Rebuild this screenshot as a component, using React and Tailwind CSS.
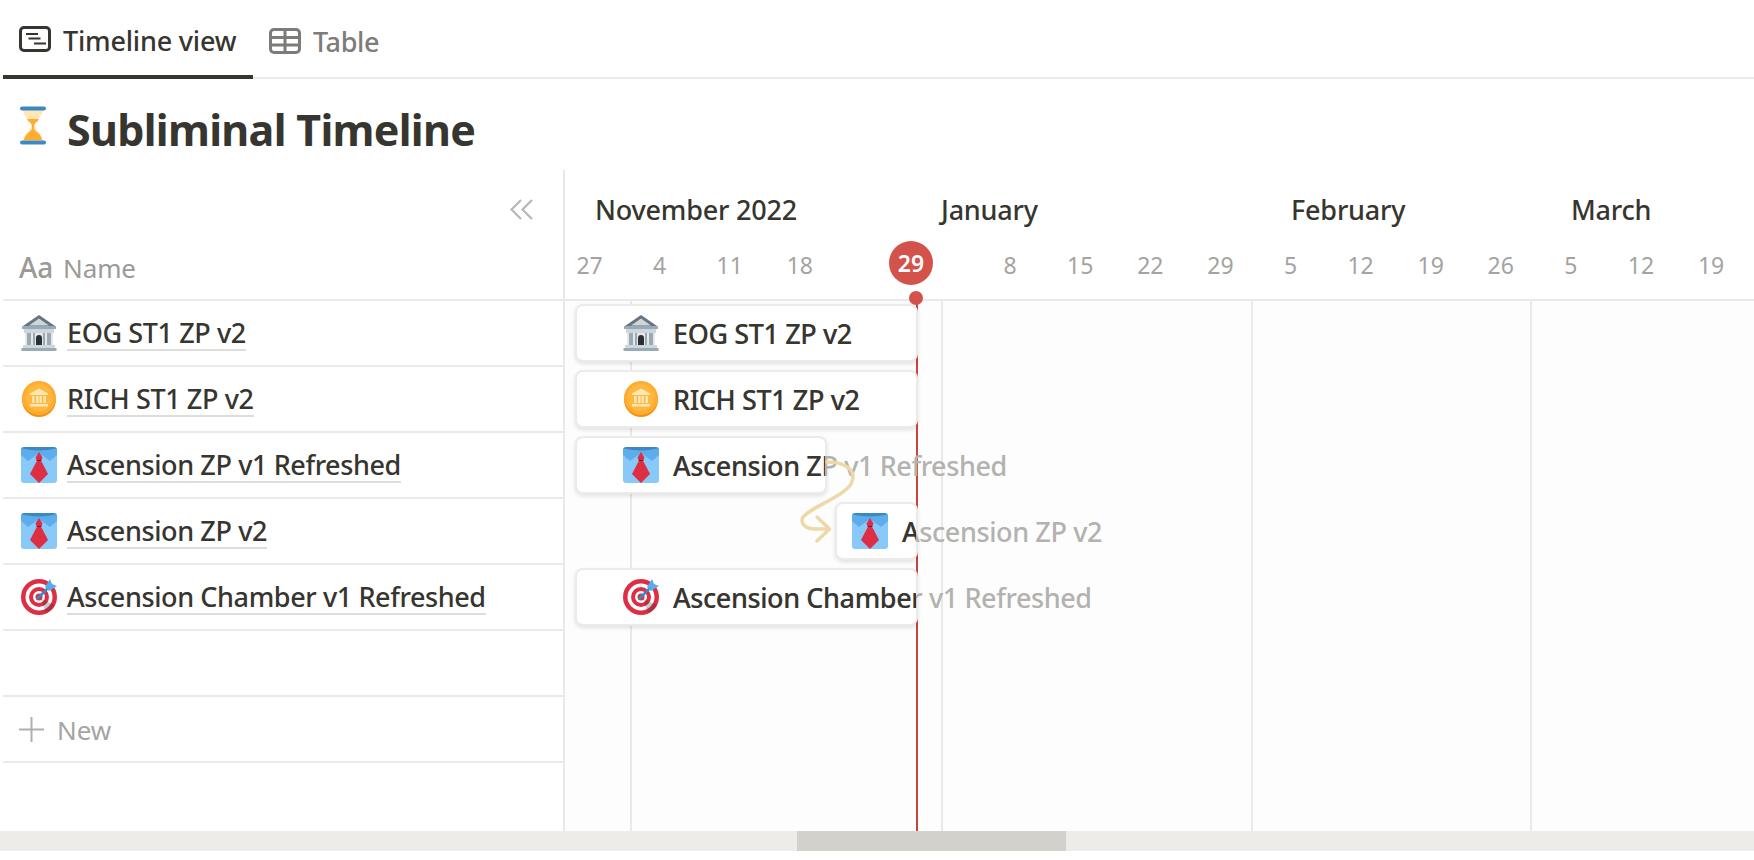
const FONT = { fontFamily: '"Noto Sans", "Open Sans", sans-serif' };

function TimelineIcon() {
  return (
    <svg width="32" height="26" viewBox="0 0 32 26" fill="none" stroke="#37352f">
      <rect x="1.500" y="1.500" width="29" height="23" rx="3.500" strokeWidth="3" />
      <path d="M7 8h12M9.500 12.500h12M15 17.500h12" strokeWidth="2" />
    </svg>
  );
}

function TableIcon() {
  return (
    <svg width="32" height="26" viewBox="0 0 32 26" fill="none" stroke="#7d7c78">
      <rect x="1.500" y="1.500" width="29" height="23" rx="3.500" strokeWidth="3" />
      <path d="M1 9.500h30M1 17h30M16 1v24" strokeWidth="3" />
    </svg>
  );
}

function Hourglass() {
  return (
    <svg width="26" height="39" viewBox="0 0 26 39">
      <path d="M3 3h20c0 8-8 11-8 16.500s8 8.500 8 16.500H3c0-8 8-11 8-16.500S3 11 3 3z" fill="#ffe8b6" />
      <path d="M7 13h12c-1 3-5 4-5 6.500v3c0 3 7 4 8 11.500H4c1-7 8-8.500 8-11.500v-3c0-2.500-4-3.500-5-6.500z" fill="#ffac33" />
      <rect x="0" y="0.500" width="26" height="4" rx="2" fill="#3b88c3" />
      <rect x="0" y="34.500" width="26" height="4" rx="2" fill="#3b88c3" />
    </svg>
  );
}

function Bank() {
  return (
    <svg width="36" height="36" viewBox="0 0 36 36" className="shrink-0">
      <path d="M18 0 34 11H2z" fill="#66757f" />
      <path d="M18 3.500 28 10.500H8z" fill="#ccd6dd" />
      <rect x="1" y="11" width="34" height="3" fill="#99aab5" />
      <rect x="3" y="14" width="30" height="4" fill="#ccd6dd" />
      <rect x="4" y="18" width="28" height="12" fill="#e6e7e8" />
      <path d="M6 18h4v12H6zM26 18h4v12h-4z" fill="#99aab5" />
      <path d="M12 18h2v12h-2zM22 18h2v12h-2z" fill="#99aab5" />
      <path d="M15 30v-7a3 3 0 0 1 6 0v7z" fill="#292f33" />
      <rect x="2" y="30" width="32" height="3" fill="#ccd6dd" />
      <rect x="0.500" y="33" width="35" height="3" fill="#99aab5" />
    </svg>
  );
}

function Coin() {
  return (
    <svg width="36" height="36" viewBox="0 0 36 36" className="shrink-0">
      <ellipse cx="18" cy="19" rx="17" ry="17" fill="#f4900c" />
      <ellipse cx="18" cy="17" rx="17" ry="17" fill="#ffac33" />
      <circle cx="18" cy="16.500" r="13.500" fill="#ffb83d" />
      <path d="M18 7.500 27 12.500v1.500H9v-1.500z" fill="#ffe8b6" />
      <path d="M11 15h2.500v7H11zM15 15h2.500v7H15zM18.500 15H21v7h-2.500zM22.500 15H25v7h-2.500z" fill="#ffe8b6" />
      <rect x="9" y="23" width="18" height="2.500" fill="#ffe8b6" />
    </svg>
  );
}

function Shirt() {
  return (
    <svg width="36" height="36" viewBox="0 0 36 36" className="shrink-0">
      <rect x="0" y="0" width="36" height="36" rx="3" fill="#88c9f9" />
      <path d="M0 3a3 3 0 0 1 3-3h30a3 3 0 0 1 3 3v5l-7 6-11-8-11 8-7-6z" fill="#5dadec" />
      <path d="M1 1.500Q18 5.500 35 1.500L33 0H3z" fill="#3b88c3" />
      <path d="M14.500 10.500 18 5l3.500 5.500-1.500 3.500h-4z" fill="#dd2e44" />
      <path d="M16 12.500c1 1 3 1 4 0l.5 1.500c-1 1-4 1-5 0z" fill="#a0041e" />
      <path d="M15.500 14.500h5L27 27l-9 9-9-9z" fill="#dd2e44" />
    </svg>
  );
}

function Dart() {
  return (
    <svg width="36" height="36" viewBox="0 0 36 36" className="shrink-0">
      <circle cx="18" cy="18" r="18" fill="#dd2e44" />
      <circle cx="18" cy="18" r="13.500" fill="#fff" />
      <circle cx="18" cy="18" r="10" fill="#dd2e44" />
      <circle cx="18" cy="18" r="6" fill="#fff" />
      <circle cx="18" cy="18" r="3.500" fill="#dd2e44" />
      <path d="M20 20 34 26a18 18 0 0 1-9 8z" fill="#292f33" fillOpacity="0.25" />
      <path d="M16 20 28 8" stroke="#3b88c3" strokeWidth="2.500" />
      <path d="M24 8 29 0l2 5 5 2-8 5z" fill="#55acee" />
    </svg>
  );
}

const ROWS = [
  { name: 'EOG ST1 ZP v2', Icon: Bank },
  { name: 'RICH ST1 ZP v2', Icon: Coin },
  { name: 'Ascension ZP v1 Refreshed', Icon: Shirt },
  { name: 'Ascension ZP v2', Icon: Shirt },
  { name: 'Ascension Chamber v1 Refreshed', Icon: Dart },
];

const BARS = [
  { ...ROWS[0], box: 'ml-[10px] w-[343px]', pad: 'pl-[46px]', ghost: 'left-[96px]' },
  { ...ROWS[1], box: 'ml-[10px] w-[343px]', pad: 'pl-[46px]', ghost: 'left-[96px]' },
  { ...ROWS[2], box: 'ml-[10px] w-[252px]', pad: 'pl-[46px]', ghost: 'left-[96px]' },
  { ...ROWS[3], box: 'ml-[270px] w-[83px]', pad: 'pl-[15px]', ghost: 'left-[65px]' },
  { ...ROWS[4], box: 'ml-[10px] w-[343px]', pad: 'pl-[46px]', ghost: 'left-[96px]' },
];

const DATES = ['27', '4', '11', '18', '', '', '8', '15', '22', '29', '5', '12', '19', '26', '5', '12', '19'];

export default function App() {
  return (
    <div className="w-[1754px] h-[860px] overflow-hidden bg-white flex flex-col text-[#37352f]" style={FONT}>
      {/* tabs */}
      <div className="h-[79px] shrink-0 ml-[3px] border-b-2 border-[#e9e9e7] flex items-start">
        <div className="h-[79px] w-[250px] border-b-4 border-[#37352f] flex items-center pl-4 gap-[12px] pt-[3px]">
          <TimelineIcon />
          <span className="text-[27px] font-medium leading-none tracking-[-0.2px] mt-[2px]">Timeline view</span>
        </div>
        <div className="h-[77px] flex items-center pl-4 gap-[12px] pt-[4px] text-[#7d7c78]">
          <TableIcon />
          <span className="text-[27px] font-medium leading-none tracking-[-0.4px] mt-[2px]">Table</span>
        </div>
      </div>

      {/* title */}
      <div className="h-[91px] shrink-0 flex items-start pl-5 pt-[27px] gap-[21px]">
        <Hourglass />
        <h1 className="text-[43px] leading-[48px] font-bold tracking-[-0.7px]">Subliminal Timeline</h1>
      </div>

      <div className="h-[661px] shrink-0 flex">
        {/* left list */}
        <div className="w-[563px] shrink-0 pl-[3px] flex flex-col">
          <div className="h-[131px] shrink-0 border-b-2 border-[#e9e9e7] relative flex items-end pb-[18px] pl-4 text-[#9b9a97]">
            <span className="text-[28px] font-medium leading-none w-[44px]">Aa</span>
            <span className="text-[26px] leading-none tracking-[-0.1px]">Name</span>
            <svg className="absolute right-[29px] top-[29px]" width="24" height="22" viewBox="0 0 24 22" fill="none" stroke="#b8b6b3" strokeWidth="2.200">
              <path d="M11 1 1.500 10.500 11 20M22 1l-9.500 9.500L22 20" />
            </svg>
          </div>
          {ROWS.map(({ name, Icon }) => (
            <div key={name} className="h-[66px] shrink-0 border-b-2 border-[#e9e9e7] flex items-center pl-[18px] gap-[10px]">
              <Icon />
              <span className="text-[27px] font-medium leading-[33px] tracking-[-0.4px] pt-[1px] border-b-2 border-[#dedddb] whitespace-nowrap">{name}</span>
            </div>
          ))}
          <div className="h-[66px] shrink-0 border-b-2 border-[#e9e9e7]" />
          <div className="h-[66px] shrink-0 border-b-2 border-[#e9e9e7] flex items-center pl-4 gap-[13px] text-[#a5a4a1]">
            <svg width="25" height="25" viewBox="0 0 25 25" stroke="#b0afac" strokeWidth="2">
              <path d="M12.500 0v25M0 12.500h25" />
            </svg>
            <span className="text-[26px] leading-none tracking-[-0.1px] mt-[2px]">New</span>
          </div>
        </div>

        {/* timeline */}
        <div className="w-[1191px] shrink-0 border-l-2 border-[#e9e9e7] flex flex-col relative overflow-hidden">
          <div className="h-[131px] shrink-0 border-b-2 border-[#e9e9e7] relative">
            <div className="flex pl-[30px] pt-[20px] text-[27px] font-medium leading-10 tracking-[-0.2px]">
              <span className="w-[346px] shrink-0">November 2022</span>
              <span className="w-[350px] shrink-0">January</span>
              <span className="w-[280px] shrink-0">February</span>
              <span className="shrink-0">March</span>
            </div>
            <div className="flex ml-[-10.5px] mt-[20px] text-[23px] leading-[30px] text-[#a5a39f]">
              {DATES.map((d, i) => (
                <span key={i} className="w-[70.1px] shrink-0 text-center">{d}</span>
              ))}
            </div>
            <div className="absolute left-[324px] top-[71px] w-11 h-11 rounded-full bg-[#d3524a] text-white text-[23px] font-semibold flex items-center justify-center">29</div>
            <div className="absolute left-[344px] top-[121px] w-[14px] h-[14px] rounded-full bg-[#d3524a] z-10" />
          </div>

          <div className="flex-1 bg-[#fdfdfd] relative">
            <div className="absolute left-[65px] top-0 bottom-0 w-[2px] bg-[#e9e9e7]" />
            <div className="absolute left-[376px] top-0 bottom-0 w-[2px] bg-[#e9e9e7]" />
            <div className="absolute left-[686px] top-0 bottom-0 w-[2px] bg-[#e9e9e7]" />
            <div className="absolute left-[965px] top-0 bottom-0 w-[2px] bg-[#e9e9e7]" />
            <div className="absolute left-[351px] top-0 bottom-0 w-[2px] bg-[#c9443c]" />

            <div className="relative flex flex-col">
              {BARS.map(({ name, Icon, box, pad, ghost }) => (
                <div key={name} className="h-[66px] shrink-0 pt-[3px]">
                  <div className={`relative h-[58px] ${box} bg-white rounded-lg border-2 border-[#ebebe9] shadow-[0_2px_4px_rgba(15,15,15,0.12)]`}>
                    <span className={`absolute ${ghost} top-[11px] text-[27px] font-medium leading-[33px] tracking-[-0.4px] text-[#b3b2af] whitespace-nowrap`}>{name}</span>
                    <div className={`relative h-full overflow-hidden flex items-center ${pad} gap-[14px] whitespace-nowrap rounded-md`}>
                      <Icon />
                      <span className="text-[27px] font-medium leading-[33px] tracking-[-0.4px] mt-[1px]">{name}</span>
                    </div>
                  </div>
                </div>
              ))}
            </div>

            <svg className="absolute left-0 top-0 pointer-events-none" width="400" height="300" fill="none" stroke="#edd9a8" strokeWidth="3.500" strokeLinecap="round" strokeLinejoin="round">
              <path d="M262 161c18 0 31 8 24 22-8 14-49 26-49 36 0 6 6 9 13 9h14" />
              <path d="M252 216l12.500 12-12.500 12" />
            </svg>
          </div>
        </div>
      </div>

      {/* scrollbar */}
      <div className="h-5 shrink-0 bg-[#edece8]">
        <div className="ml-[797px] w-[269px] h-full bg-[#d3d1cb]" />
      </div>
    </div>
  );
}
